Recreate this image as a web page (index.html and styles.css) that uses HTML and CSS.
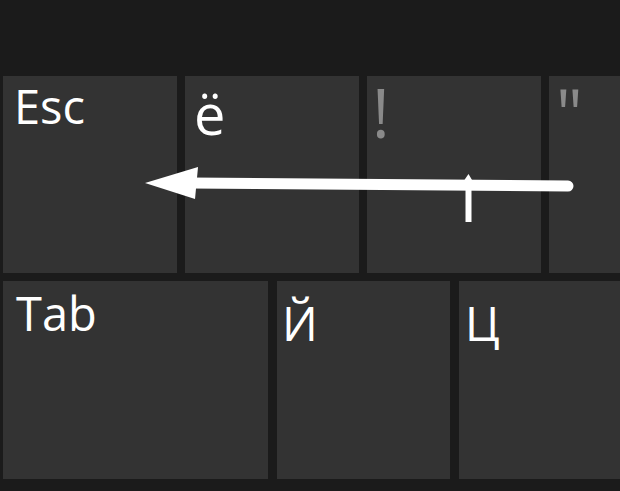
FILE: index.html
```html
<!DOCTYPE html>
<html lang="ru">
<head>
  <meta charset="UTF-8" />
  <meta name="viewport" content="width=device-width, initial-scale=1.0" />
  <title>Сенсорная клавиатура</title>
  <link rel="stylesheet" href="styles.css">
</head>
<body>
  <div class="keyboard">
    <div class="topbar"></div>
    <div class="row row-top">
      <div class="key key-esc"><span class="label">Esc</span></div>
      <div class="key key-yo"><span class="label letter-yo">ё</span></div>
      <div class="key key-one"><span class="label shift">!</span></div>
      <div class="key key-two"><span class="label shift">"</span></div>
    </div>
    <div class="row row-second">
      <div class="key key-tab"><span class="label">Tab</span></div>
      <div class="key key-y"><span class="label letter">Й</span></div>
      <div class="key key-ts"><span class="label letter">Ц</span></div>
    </div>
  </div>

  <!-- swipe gesture drawn over the keys -->
  <svg class="gesture" width="620" height="491" viewBox="0 0 620 491">
    <polyline points="190,183 568,186" fill="none" stroke="#fff" stroke-width="11" stroke-linecap="round" />
    <polygon points="145,183 198,167 195,199" fill="#fff" />
    <line x1="468.5" y1="180" x2="468.5" y2="222" stroke="#fff" stroke-width="6" />
    <polygon points="461,185 468.5,174 475,185" fill="#fff" />
  </svg>
</body>
</html>
```

FILE: styles.css
```css
html, body {
  margin: 0;
  height: 100%;
}
body {
  background: #1b1b1b;
  font-family: 'Open Sans', 'Noto Sans', sans-serif;
  overflow: hidden;
  position: relative;
}
.keyboard {
  display: flex;
  flex-direction: column;
  gap: 8px;
}
.topbar {
  height: 68px;
}
.row {
  display: flex;
  padding-left: 3px;
}
.row-top {
  gap: 8px;
  height: 197px;
}
.row-second {
  gap: 9px;
  height: 198px;
}
.key {
  background: #333333;
  color: #fff;
}
.key-esc, .key-yo, .key-one { width: 174px; }
.key-tab { width: 265px; }
.key-y { width: 173px; }
.key-two, .key-ts { flex: 1; }

.label {
  display: block;
  font-size: 47px;
  line-height: 1;
  padding: 7px 0 0 11px;
}
.key-tab .label {
  padding-top: 9px;
  padding-left: 13px;
}
.letter-yo {
  font-size: 56px;
  padding: 9px 0 0 9px;
}
.letter {
  padding-top: 19px;
}
.key-y .letter { padding-left: 5px; }
.key-ts .letter { padding-left: 6px; }
.shift {
  color: #8a8a8a;
  font-size: 67px;
  padding: 3px 0 0 5px;
}
.key-two .shift { padding-left: 7px; }

.gesture {
  position: absolute;
  left: 0;
  top: 0;
  pointer-events: none;
}
```
